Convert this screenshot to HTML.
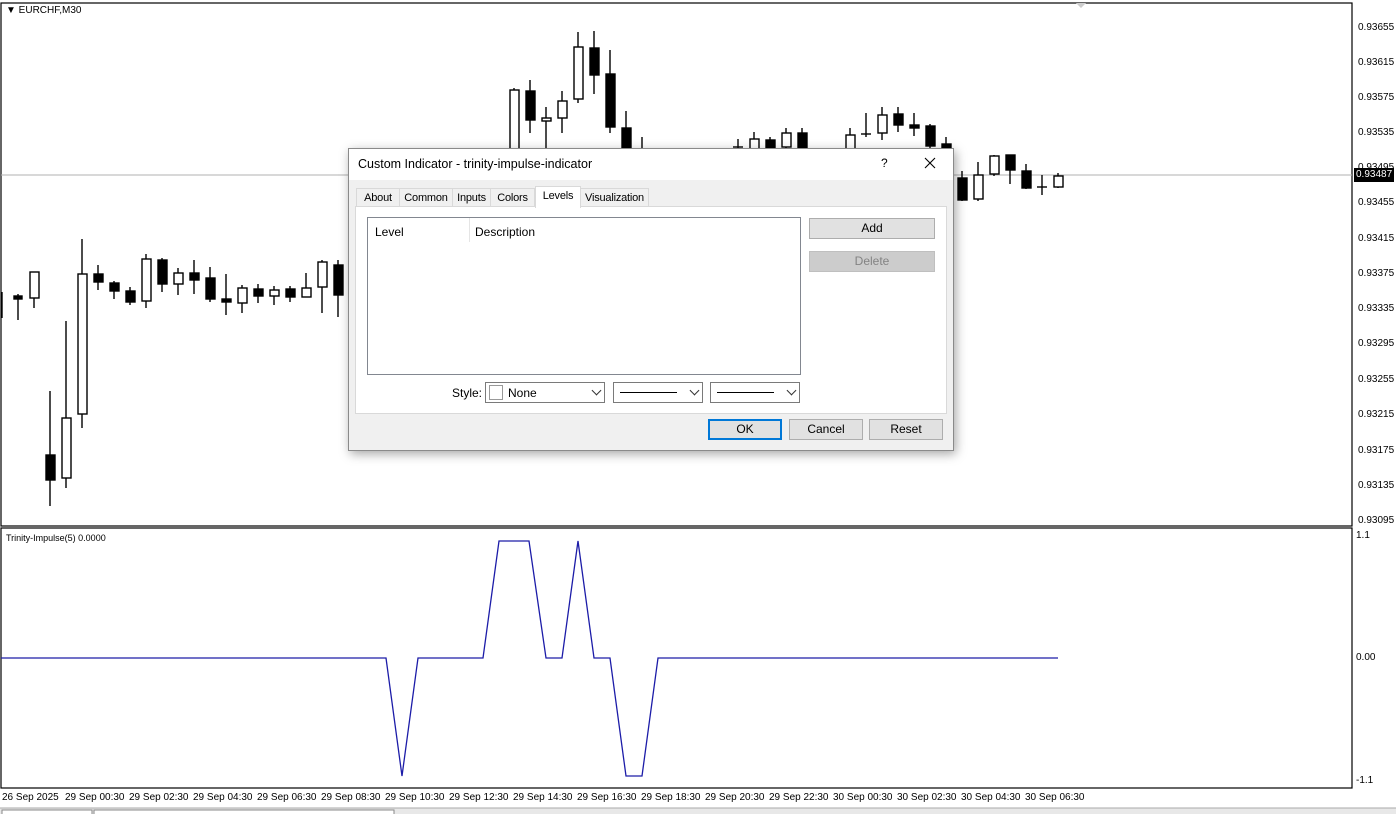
<!DOCTYPE html>
<html><head><meta charset="utf-8"><style>
body{margin:0;width:1396px;height:814px;overflow:hidden;background:#fff;font-family:"Liberation Sans",sans-serif;position:relative}
.ax{position:absolute;font-size:10px;color:#000}
.dlg{position:absolute;left:348px;top:148px;width:604px;height:301px;background:#f0f0f0;border:1px solid #8a8a8a;box-shadow:2px 3px 10px rgba(0,0,0,.35);font-size:12px}
.title{position:absolute;left:0;top:0;width:604px;height:31px;background:#fff}
.tab{position:absolute;top:39px;height:18px;border:1px solid #d9d9d9;border-bottom:none;background:#f0f0f0;line-height:18px;text-align:center;font-size:11px;letter-spacing:-0.2px}
.btn{position:absolute;height:19px;border:1px solid #adadad;background:#e1e1e1;text-align:center;line-height:19px}
.cb{position:absolute;top:233px;height:19px;border:1px solid #7a7a7a;background:#fff}
.chev{position:absolute;right:4px;top:4px;width:6px;height:6px;border-right:1px solid #333;border-bottom:1px solid #333;transform:rotate(45deg)}
</style></head><body>
<svg width="1396" height="814" style="position:absolute;left:0;top:0">
<rect x="1" y="3" width="1351" height="523" fill="none" stroke="#000" stroke-width="1.2"/>
<rect x="1" y="528" width="1351" height="260" fill="none" stroke="#000" stroke-width="1.2"/>
<line x1="1" y1="175" x2="1352" y2="175" stroke="#b0b0b0"/>
<polygon points="1076,3 1086,3 1081,8" fill="#ccc"/>
<g stroke="#000" stroke-width="1.4">
<line x1="2" y1="292" x2="2" y2="318"/>
<line x1="18" y1="294" x2="18" y2="320"/><rect x="14" y="296" width="8" height="3" fill="#000"/>
<line x1="34" y1="298" x2="34" y2="308"/><rect x="30" y="272" width="9" height="26" fill="#fff"/>
<line x1="50" y1="391" x2="50" y2="506"/><rect x="46" y="455" width="9" height="25" fill="#000"/>
<line x1="66" y1="321" x2="66" y2="488"/><rect x="62" y="418" width="9" height="60" fill="#fff"/>
<line x1="82" y1="239" x2="82" y2="428"/><rect x="78" y="274" width="9" height="140" fill="#fff"/>
<line x1="98" y1="265" x2="98" y2="290"/><rect x="94" y="274" width="9" height="8" fill="#000"/>
<line x1="114" y1="281" x2="114" y2="299"/><rect x="110" y="283" width="9" height="8" fill="#000"/>
<line x1="130" y1="287" x2="130" y2="305"/><rect x="126" y="291" width="9" height="11" fill="#000"/>
<line x1="146" y1="254" x2="146" y2="308"/><rect x="142" y="259" width="9" height="42" fill="#fff"/>
<line x1="162" y1="258" x2="162" y2="292"/><rect x="158" y="260" width="9" height="24" fill="#000"/>
<line x1="178" y1="268" x2="178" y2="295"/><rect x="174" y="273" width="9" height="11" fill="#fff"/>
<line x1="194" y1="260" x2="194" y2="294"/><rect x="190" y="273" width="9" height="7" fill="#000"/>
<line x1="210" y1="267" x2="210" y2="302"/><rect x="206" y="278" width="9" height="21" fill="#000"/>
<line x1="226" y1="274" x2="226" y2="315"/><rect x="222" y="299" width="9" height="3" fill="#000"/>
<line x1="242" y1="285" x2="242" y2="313"/><rect x="238" y="288" width="9" height="15" fill="#fff"/>
<line x1="258" y1="284" x2="258" y2="303"/><rect x="254" y="289" width="9" height="7" fill="#000"/>
<line x1="274" y1="286" x2="274" y2="305"/><rect x="270" y="290" width="9" height="6" fill="#fff"/>
<line x1="290" y1="286" x2="290" y2="302"/><rect x="286" y="289" width="9" height="8" fill="#000"/>
<line x1="306" y1="273" x2="306" y2="297"/><rect x="302" y="288" width="9" height="9" fill="#fff"/>
<line x1="322" y1="260" x2="322" y2="313"/><rect x="318" y="262" width="9" height="25" fill="#fff"/>
<line x1="338" y1="260" x2="338" y2="317"/><rect x="334" y="265" width="9" height="30" fill="#000"/>
<line x1="514" y1="88" x2="514" y2="150"/><rect x="510" y="90" width="9" height="60" fill="#fff"/>
<line x1="530" y1="80" x2="530" y2="133"/><rect x="526" y="91" width="9" height="29" fill="#000"/>
<line x1="546" y1="107" x2="546" y2="150"/><rect x="542" y="118" width="9" height="3" fill="#fff"/>
<line x1="562" y1="91" x2="562" y2="133"/><rect x="558" y="101" width="9" height="17" fill="#fff"/>
<line x1="578" y1="32" x2="578" y2="103"/><rect x="574" y="47" width="9" height="52" fill="#fff"/>
<line x1="594" y1="31" x2="594" y2="94"/><rect x="590" y="48" width="9" height="27" fill="#000"/>
<line x1="610" y1="50" x2="610" y2="133"/><rect x="606" y="74" width="9" height="53" fill="#000"/>
<line x1="626" y1="111" x2="626" y2="150"/><rect x="622" y="128" width="9" height="22" fill="#000"/>
<line x1="642" y1="137" x2="642" y2="150"/>
<line x1="738" y1="139" x2="738" y2="150"/><line x1="733" y1="147" x2="743" y2="147"/>
<line x1="754" y1="132" x2="754" y2="150"/><rect x="750" y="139" width="9" height="11" fill="#fff"/>
<line x1="770" y1="137" x2="770" y2="150"/><rect x="766" y="140" width="9" height="10" fill="#000"/>
<line x1="786" y1="128" x2="786" y2="150"/><rect x="782" y="133" width="9" height="14" fill="#fff"/>
<line x1="802" y1="128" x2="802" y2="150"/><rect x="798" y="133" width="9" height="17" fill="#000"/>
<line x1="850" y1="128" x2="850" y2="150"/><rect x="846" y="135" width="9" height="15" fill="#fff"/>
<line x1="866" y1="113" x2="866" y2="137"/><line x1="861" y1="134" x2="871" y2="134"/>
<line x1="882" y1="107" x2="882" y2="140"/><rect x="878" y="115" width="9" height="18" fill="#fff"/>
<line x1="898" y1="107" x2="898" y2="132"/><rect x="894" y="114" width="9" height="11" fill="#000"/>
<line x1="914" y1="113" x2="914" y2="136"/><rect x="910" y="125" width="9" height="3" fill="#000"/>
<line x1="930" y1="124" x2="930" y2="150"/><rect x="926" y="126" width="9" height="20" fill="#000"/>
<line x1="946" y1="137" x2="946" y2="150"/><rect x="942" y="144" width="9" height="6" fill="#000"/>
<line x1="962" y1="171" x2="962" y2="201"/><rect x="958" y="178" width="9" height="22" fill="#000"/>
<line x1="978" y1="162" x2="978" y2="201"/><rect x="974" y="175" width="9" height="24" fill="#fff"/>
<line x1="994" y1="155" x2="994" y2="176"/><rect x="990" y="156" width="9" height="18" fill="#fff"/>
<line x1="1010" y1="155" x2="1010" y2="184"/><rect x="1006" y="155" width="9" height="15" fill="#000"/>
<line x1="1026" y1="164" x2="1026" y2="189"/><rect x="1022" y="171" width="9" height="17" fill="#000"/>
<line x1="1042" y1="175" x2="1042" y2="195"/><line x1="1037" y1="187" x2="1047" y2="187"/>
<line x1="1058" y1="173" x2="1058" y2="188"/><rect x="1054" y="176" width="9" height="11" fill="#fff"/>
</g>
<polyline fill="none" stroke="#1c1ca8" stroke-width="1.3" points="1,658 386,658 402,776 418,658 483,658 499,541 529,541 546,658 562,658 578,541 594,658 610,658 626,776 642,776 658,658 1058,658"/>
<rect x="1354" y="168" width="40" height="14" fill="#000"/>
<rect x="0" y="808" width="1396" height="6" fill="#e8e8e8"/>
<line x1="0" y1="808" x2="1396" y2="808" stroke="#aaa"/>
<rect x="2" y="810" width="90" height="6" fill="#fff" stroke="#888"/>
<rect x="94" y="810" width="300" height="6" fill="#fff" stroke="#888"/>
</svg>
<div class="ax" style="left:6px;top:5px;font-size:10px">&#9660; EURCHF,M30</div>
<div class="ax" style="left:6px;top:533px;font-size:9px">Trinity-Impulse(5) 0.0000</div>
<div class="ax" style="left:1358px;top:22px">0.93655</div>
<div class="ax" style="left:1358px;top:57px">0.93615</div>
<div class="ax" style="left:1358px;top:92px">0.93575</div>
<div class="ax" style="left:1358px;top:127px">0.93535</div>
<div class="ax" style="left:1358px;top:162px">0.93495</div>
<div class="ax" style="left:1356px;top:169px;color:#fff">0.93487</div>
<div class="ax" style="left:1358px;top:197px">0.93455</div>
<div class="ax" style="left:1358px;top:233px">0.93415</div>
<div class="ax" style="left:1358px;top:268px">0.93375</div>
<div class="ax" style="left:1358px;top:303px">0.93335</div>
<div class="ax" style="left:1358px;top:338px">0.93295</div>
<div class="ax" style="left:1358px;top:374px">0.93255</div>
<div class="ax" style="left:1358px;top:409px">0.93215</div>
<div class="ax" style="left:1358px;top:445px">0.93175</div>
<div class="ax" style="left:1358px;top:480px">0.93135</div>
<div class="ax" style="left:1358px;top:515px">0.93095</div>
<div class="ax" style="left:1356px;top:530px">1.1</div>
<div class="ax" style="left:1356px;top:652px">0.00</div>
<div class="ax" style="left:1356px;top:775px">-1.1</div>
<div class="ax" style="left:2px;top:792px">26 Sep 2025</div>
<div class="ax" style="left:65px;top:792px">29 Sep 00:30</div>
<div class="ax" style="left:129px;top:792px">29 Sep 02:30</div>
<div class="ax" style="left:193px;top:792px">29 Sep 04:30</div>
<div class="ax" style="left:257px;top:792px">29 Sep 06:30</div>
<div class="ax" style="left:321px;top:792px">29 Sep 08:30</div>
<div class="ax" style="left:385px;top:792px">29 Sep 10:30</div>
<div class="ax" style="left:449px;top:792px">29 Sep 12:30</div>
<div class="ax" style="left:513px;top:792px">29 Sep 14:30</div>
<div class="ax" style="left:577px;top:792px">29 Sep 16:30</div>
<div class="ax" style="left:641px;top:792px">29 Sep 18:30</div>
<div class="ax" style="left:705px;top:792px">29 Sep 20:30</div>
<div class="ax" style="left:769px;top:792px">29 Sep 22:30</div>
<div class="ax" style="left:833px;top:792px">30 Sep 00:30</div>
<div class="ax" style="left:897px;top:792px">30 Sep 02:30</div>
<div class="ax" style="left:961px;top:792px">30 Sep 04:30</div>
<div class="ax" style="left:1025px;top:792px">30 Sep 06:30</div>

<div class="dlg">
 <div class="title">
  <div style="position:absolute;left:9px;top:8px;font-size:12.5px">Custom Indicator - trinity-impulse-indicator</div>
  <div style="position:absolute;left:532px;top:7px;font-size:12px">?</div>
  <svg style="position:absolute;left:575px;top:8px" width="12" height="12"><path d="M1 1L11 11M11 1L1 11" stroke="#000" stroke-width="1.1"/></svg>
 </div>
 <div class="tab" style="left:7px;width:42px">About</div>
 <div class="tab" style="left:50px;width:52px">Common</div>
 <div class="tab" style="left:103px;width:37px">Inputs</div>
 <div class="tab" style="left:141px;width:43px">Colors</div>
 <div class="tab" style="left:186px;top:37px;height:21px;width:44px;background:#fff;z-index:2;line-height:18px">Levels</div>
 <div class="tab" style="left:231px;width:67px">Visualization</div>
 <div style="position:absolute;left:6px;top:57px;width:590px;height:206px;background:#fff;border:1px solid #d9d9d9"></div>
 <div style="position:absolute;left:18px;top:68px;width:432px;height:156px;background:#fff;border:1px solid #828790">
  <div style="position:absolute;left:7px;top:7px">Level</div>
  <div style="position:absolute;left:101px;top:0;width:1px;height:24px;background:#e5e5e5"></div>
  <div style="position:absolute;left:107px;top:7px">Description</div>
 </div>
 <div class="btn" style="left:460px;top:69px;width:124px">Add</div>
 <div class="btn" style="left:460px;top:102px;width:124px;background:#cccccc;border-color:#bfbfbf;color:#838383">Delete</div>
 <div style="position:absolute;left:103px;top:237px">Style:</div>
 <div class="cb" style="left:136px;width:118px"><div style="position:absolute;left:3px;top:2px;width:12px;height:13px;border:1px solid #999"></div><div style="position:absolute;left:22px;top:3px">None</div><div class="chev"></div></div>
 <div class="cb" style="left:264px;width:88px"><div style="position:absolute;left:6px;top:9px;width:57px;height:1px;background:#000"></div><div class="chev"></div></div>
 <div class="cb" style="left:361px;width:88px"><div style="position:absolute;left:6px;top:9px;width:57px;height:1px;background:#000"></div><div class="chev"></div></div>
 <div class="btn" style="left:359px;top:270px;width:70px;border:2px solid #0078d7;height:17px;line-height:17px">OK</div>
 <div class="btn" style="left:440px;top:270px;width:72px">Cancel</div>
 <div class="btn" style="left:520px;top:270px;width:72px">Reset</div>
</div>
</body></html>
